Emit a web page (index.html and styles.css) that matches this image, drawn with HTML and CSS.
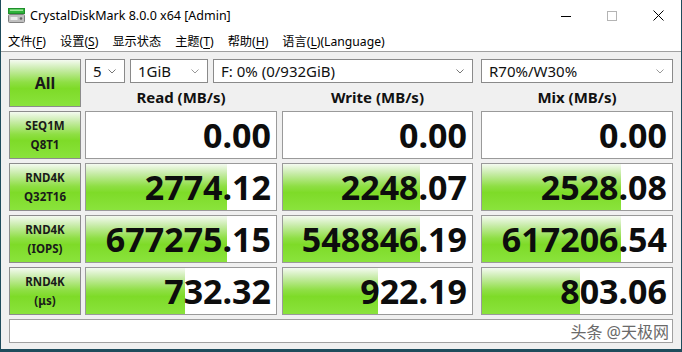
FILE: index.html
```html
<!DOCTYPE html>
<html>
<head>
    <title>CrystalDiskMark 8.0.0 x64 [Admin]</title>
    <link rel="stylesheet" href="styles.css">
</head>
<body>
<div class="window">
    <div class="titlebar">
        <svg class="app-icon" width="17" height="15" viewBox="0 0 17 15">
            <rect x="0.5" y="0.5" width="16" height="5" fill="#2fb23a" stroke="#1f8f2c"/>
            <rect x="2" y="1.5" width="13" height="1.5" fill="#9ee89a"/>
            <rect x="0.5" y="6.5" width="16" height="8" rx="1" fill="#bfbfbf" stroke="#808080"/>
            <rect x="2.5" y="9" width="7" height="3" fill="#ececec"/>
            <circle cx="13" cy="10.5" r="1.3" fill="#666"/>
        </svg>
        <span class="title">CrystalDiskMark 8.0.0 x64 [Admin]</span>
        <div class="caption-btns">
            <span class="cap"><svg width="10" height="10" viewBox="0 0 10 10"><path d="M0 5.5H10" stroke="#000" stroke-width="1"/></svg></span>
            <span class="cap"><svg width="10" height="10" viewBox="0 0 10 10"><rect x="0.5" y="0.5" width="9" height="9" fill="none" stroke="#b4b4b4"/></svg></span>
            <span class="cap"><svg width="11" height="11" viewBox="0 0 11 11"><path d="M0.5 0.5L10.5 10.5M10.5 0.5L0.5 10.5" stroke="#000" stroke-width="1"/></svg></span>
        </div>
    </div>

    <div class="menubar">
        <span>文件(<u>F</u>)</span>
        <span>设置(<u>S</u>)</span>
        <span>显示状态</span>
        <span>主题(<u>T</u>)</span>
        <span>帮助(<u>H</u>)</span>
        <span>语言(<u>L</u>)(Language)</span>
    </div>

    <div class="content">
        <div class="grid">
            <div class="all">All</div>

            <div class="combos">
                <div class="combo c-count">5<svg class="chev" width="8" height="5" viewBox="0 0 8 5"><path d="M0.5 0.5L4 4L7.5 0.5" fill="none" stroke="#777"/></svg></div>
                <div class="combo c-size">1GiB<svg class="chev" width="8" height="5" viewBox="0 0 8 5"><path d="M0.5 0.5L4 4L7.5 0.5" fill="none" stroke="#999"/></svg></div>
                <div class="combo c-drive">F: 0% (0/932GiB)<svg class="chev" width="8" height="5" viewBox="0 0 8 5"><path d="M0.5 0.5L4 4L7.5 0.5" fill="none" stroke="#777"/></svg></div>
            </div>
            <div class="combo c-mix">R70%/W30%<svg class="chev" width="8" height="5" viewBox="0 0 8 5"><path d="M0.5 0.5L4 4L7.5 0.5" fill="none" stroke="#999"/></svg></div>

            <div class="hdr h-read">Read (MB/s)</div>
            <div class="hdr h-write">Write (MB/s)</div>
            <div class="hdr h-mix">Mix (MB/s)</div>

            <div class="label">SEQ1M<br>Q8T1</div>
            <div class="cell read"><span class="num">0.00</span></div>
            <div class="cell write"><span class="num">0.00</span></div>
            <div class="cell mix"><span class="num">0.00</span></div>

            <div class="label">RND4K<br>Q32T16</div>
            <div class="cell read"><div class="bar" style="width: 141px"></div><span class="num">2774.12</span></div>
            <div class="cell write"><div class="bar" style="width: 137px"></div><span class="num">2248.07</span></div>
            <div class="cell mix"><div class="bar" style="width: 139px"></div><span class="num">2528.08</span></div>

            <div class="label">RND4K<br>(IOPS)</div>
            <div class="cell read"><div class="bar" style="width: 141px"></div><span class="num">677275.15</span></div>
            <div class="cell write"><div class="bar" style="width: 137px"></div><span class="num">548846.19</span></div>
            <div class="cell mix"><div class="bar" style="width: 139px"></div><span class="num">617206.54</span></div>

            <div class="label">RND4K<br>(μs)</div>
            <div class="cell read"><div class="bar" style="width: 99px"></div><span class="num">732.32</span></div>
            <div class="cell write"><div class="bar" style="width: 95px"></div><span class="num">922.19</span></div>
            <div class="cell mix"><div class="bar" style="width: 98px"></div><span class="num">803.06</span></div>
        </div>

        <div class="comment">头条 @天极网</div>
    </div>
</div>
</body>
</html>
```

FILE: styles.css
```css
html, body { margin: 0; background: #1f4c5c; }
body {
    font-family: "Noto Sans", "Noto Sans CJK SC", sans-serif;
    color: #000;
}

.window {
    width: 680px; height: 349px; margin-left: 1px;
    background: #f0f0f0;
    display: flex; flex-direction: column;
}

/* title bar */
.titlebar {
    height: 31px; background: #fff;
    display: flex; align-items: center;
    font-size: 12.5px;
}
.app-icon { margin: 0 5px 1px 7px; }
.caption-btns { margin-left: auto; display: flex; }
.cap {
    width: 46px; height: 31px;
    display: flex; align-items: center; justify-content: center;
}

/* menu */
.menubar {
    height: 20px; background: #fff;
    border-bottom: 1px solid #a0a0a0;
    display: flex; align-items: center;
    font-size: 12.2px;
}
.menubar span { padding: 0 7px; }
.menubar u { text-decoration-thickness: 1px; text-underline-offset: 2px; }

/* main area */
.content { flex: 1; padding: 7px 8px 0 8px; }
.grid {
    display: grid;
    grid-template-columns: 76px 197px 199px 192px;
    grid-template-rows: repeat(5, 48px);
    row-gap: 4px;
}

.all, .label, .bar {
    background: linear-gradient(to bottom, #f4faf0 0%, #c9ecab 20%, #8fdf45 48%, #7edb28 62%, #8ae33c 100%);
}

.all {
    grid-column: 1; grid-row: 1;
    margin-right: 4px;
    border: 1px solid #8c8c8c;
    display: flex; align-items: center; justify-content: center;
    font-weight: 700; font-size: 16px; color: #1a1a1a;
}

.combos {
    grid-column: 2 / 4; grid-row: 1;
    align-self: start;
    display: flex; gap: 5px;
}
.combo {
    height: 24px; box-sizing: border-box;
    border: 1px solid #8a8a8a; background: #fff;
    display: flex; align-items: center; justify-content: space-between;
    padding: 0 8px 0 7px;
    font-size: 15px; color: #111;
}
.c-count { width: 40px; }
.c-size { width: 78px; }
.c-drive { width: 260px; }
.c-mix { grid-column: 4; grid-row: 1; align-self: start; }
.chev { flex: none; }

.hdr {
    grid-row: 1; align-self: end;
    text-align: center;
    font-weight: 700; font-size: 15px; line-height: 19px;
    color: #111;
}
.h-read { grid-column: 2; margin-right: 5px; }
.h-write { grid-column: 3; margin-right: 8px; }
.h-mix { grid-column: 4; }

.label {
    margin-right: 4px;
    border: 1px solid #8c8c8c;
    display: flex; flex-direction: column; align-items: center; justify-content: center;
    font-weight: 700; font-size: 11.5px; line-height: 19px;
    color: #1a1a1a;
    text-align: center;
}

.cell {
    position: relative;
    border: 1px solid #9a9a9a; background: #fff;
    display: flex; align-items: center; justify-content: flex-end;
    padding-right: 5px;
    font-weight: 700; font-size: 34px; line-height: 1;
    overflow: hidden;
}
.cell.read { margin-right: 5px; }
.cell.write { margin-right: 8px; }
.bar { position: absolute; left: 0; top: 0; bottom: 0; }
.num { position: relative; color: #0d0d0d; }

.comment {
    margin-top: 4px; height: 24px; box-sizing: border-box;
    border: 1px solid #a0a0a0; background: #fff;
    display: flex; align-items: center; justify-content: flex-end;
    padding-right: 3px;
    font-size: 16px; color: #6a6a6a;
}
```
